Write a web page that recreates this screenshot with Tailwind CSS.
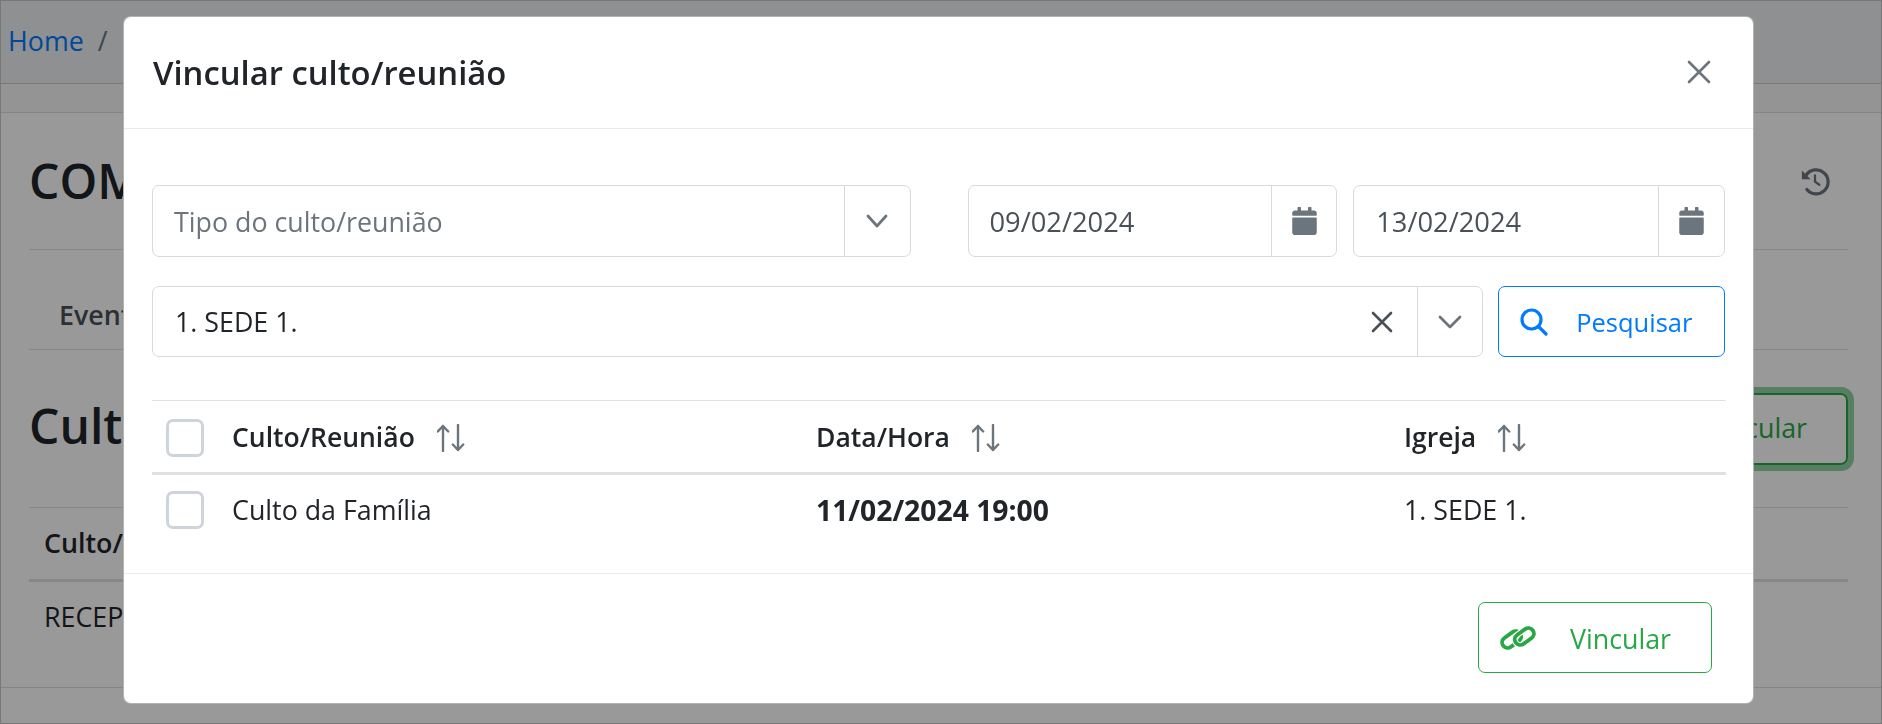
<!DOCTYPE html>
<html lang="pt-BR">
<head>
    <meta charset="UTF-8">
    <meta name="viewport" content="width=device-width, initial-scale=1.0">
    <title>Vincular culto/reunião</title>
    <script src="https://cdn.jsdelivr.net/npm/@tailwindcss/browser@4"></script>
</head>
<body class="bg-white overflow-hidden font-['Open_Sans','Noto_Sans',sans-serif] text-[26.8px] text-[#212529]">
    <!-- page behind the modal -->
    <div class="h-[724px] border border-[#c8c8c8] overflow-hidden">
        <header class="h-[83px] bg-[#edf0f3] border-b border-[#c4c6c8] flex items-center pl-[7px] pb-[1px]">
            <a href="#" class="text-[#007bff]">Home</a>
            <span class="ml-[14px] text-[#6c757d]">/</span>
        </header>
        <div class="h-[29px] bg-[#f7f7f7] border-b border-[#dedede]"></div>
        <main class="h-[575px] border-b border-[#dedede] pl-[28px] pr-[33px]">
            <div class="h-[137px] border-b border-[#dee2e6] flex items-center justify-between">
                <h2 class="text-[48px] font-semibold">COM</h2>
                <svg class="w-[30px] h-[30px] mr-[18px] text-[#6c757d]" viewBox="0 0 24 24" fill="none" stroke="currentColor" stroke-width="2.600" stroke-linecap="round">
                    <path d="M5 7.200A9.600 9.600 0 1 1 5.500 18.800"/>
                    <path d="M1.500 3.500v7h7z" fill="currentColor" stroke="none"/>
                    <path d="M12 7.500v5l3.500 2.500" stroke-width="1.800"/>
                </svg>
            </div>
            <div class="h-[100px] border-b border-[#dee2e6] pt-[45px] pl-[30px] font-semibold text-[#495057]">Eventos</div>
            <div class="h-[158px] border-b border-[#dee2e6] flex items-center justify-between">
                <h2 class="text-[48px] font-semibold pb-[6px]">Cultos</h2>
                <button class="h-[72px] w-[300px] border-2 border-[#28a745] rounded-[7px] ring-[6px] ring-[#28a745]/50 text-[#28a745] text-right pr-[39px]">Vincular</button>
            </div>
            <div class="h-[74px] border-b-[3px] border-[#dee2e6] pl-[15px] pt-[15px] font-semibold">Culto/Reunião</div>
            <div class="pl-[15px] pt-[15px]">RECEPÇÃO</div>
        </main>
    </div>

    <!-- backdrop -->
    <div class="fixed inset-0 bg-black/40"></div>

    <!-- modal -->
    <div class="fixed left-[123px] top-[16px] w-[1631px] h-[688px] bg-white rounded-[8px] border border-black/30 flex flex-col">
        <div class="h-[112px] shrink-0 border-b border-[#e9ecef] flex items-center justify-between pl-[29px] pr-[42px]">
            <h5 class="text-[32.800px] font-semibold">Vincular culto/reunião</h5>
            <button class="text-[#6c757d] pb-[2px]">
                <svg class="w-[24px] h-[24px]" viewBox="0 0 24 24" fill="none" stroke="currentColor" stroke-width="2.600" stroke-linecap="round"><path d="M2 2l20 20M22 2L2 22"/></svg>
            </button>
        </div>

        <div class="flex-1 px-[28px] pt-[56px]">
            <div class="flex">
                <div class="w-[759px] h-[72px] border border-[#d5dae0] rounded-[7px] flex items-center">
                    <span class="flex-1 pl-[21px] text-[#6c757d] pt-[2px]">Tipo do culto/reunião</span>
                    <span class="w-[66px] h-full border-l border-[#d5dae0] flex items-center justify-center">
                        <svg class="w-[22px] h-[14px] text-[#6c757d]" viewBox="0 0 22 14" fill="none" stroke="currentColor" stroke-width="2.800" stroke-linecap="round" stroke-linejoin="round"><path d="M2 2l9 10 9-10"/></svg>
                    </span>
                </div>
                <div class="w-[370px] h-[72px] ml-[57px] border border-[#d5dae0] rounded-[7px] flex items-center">
                    <span class="flex-1 pl-[21px] text-[#495057] text-[27.300px] pt-[2px]">09/02/2024</span>
                    <span class="w-[65px] h-full border-l border-[#d5dae0] flex items-center justify-center">
                        <svg class="w-[25px] h-[28px] text-[#6c757d]" viewBox="0 0 448 512" fill="currentColor"><path d="M12 192h424c6.600 0 12 5.400 12 12v260c0 26.500-21.500 48-48 48H48c-26.500 0-48-21.500-48-48V204c0-6.600 5.400-12 12-12zm436-44v-36c0-26.500-21.500-48-48-48h-48V12c0-6.600-5.400-12-12-12h-40c-6.600 0-12 5.400-12 12v52H160V12c0-6.600-5.400-12-12-12h-40c-6.600 0-12 5.400-12 12v52H48C21.500 64 0 85.500 0 112v36c0 6.600 5.400 12 12 12h424c6.600 0 12-5.400 12-12z"/></svg>
                    </span>
                </div>
                <div class="w-[372px] h-[72px] ml-[16px] border border-[#d5dae0] rounded-[7px] flex items-center">
                    <span class="flex-1 pl-[22px] text-[#495057] text-[27.300px] pt-[2px]">13/02/2024</span>
                    <span class="w-[66px] h-full border-l border-[#d5dae0] flex items-center justify-center">
                        <svg class="w-[25px] h-[28px] text-[#6c757d]" viewBox="0 0 448 512" fill="currentColor"><path d="M12 192h424c6.600 0 12 5.400 12 12v260c0 26.500-21.500 48-48 48H48c-26.500 0-48-21.500-48-48V204c0-6.600 5.400-12 12-12zm436-44v-36c0-26.500-21.500-48-48-48h-48V12c0-6.600-5.400-12-12-12h-40c-6.600 0-12 5.400-12 12v52H160V12c0-6.600-5.400-12-12-12h-40c-6.600 0-12 5.400-12 12v52H48C21.500 64 0 85.500 0 112v36c0 6.600 5.400 12 12 12h424c6.600 0 12-5.400 12-12z"/></svg>
                    </span>
                </div>
            </div>

            <div class="flex mt-[29px]">
                <div class="w-[1332px] h-[71px] border border-[#d5dae0] rounded-[7px] flex items-center">
                    <span class="flex-1 pl-[22px] pt-[1px]">1. SEDE 1.</span>
                    <svg class="w-[22px] h-[22px] mr-[24px] text-[#495057]" viewBox="0 0 22 22" fill="none" stroke="currentColor" stroke-width="2.600" stroke-linecap="round"><path d="M2 2l18 18M20 2L2 20"/></svg>
                    <span class="w-[65px] h-full border-l border-[#d5dae0] flex items-center justify-center">
                        <svg class="w-[24px] h-[14px] text-[#6c757d]" viewBox="0 0 24 14" fill="none" stroke="currentColor" stroke-width="2.800" stroke-linecap="round" stroke-linejoin="round"><path d="M2 2l10 10 10-10"/></svg>
                    </span>
                </div>
                <button class="w-[227px] h-[71px] ml-[15px] border border-[#007bff] rounded-[7px] text-[#007bff] flex items-center pl-[21px]">
                    <svg class="w-[28px] h-[28px]" viewBox="0 0 28 28" fill="none" stroke="currentColor" stroke-width="3.200" stroke-linecap="round"><circle cx="11.500" cy="11.500" r="9.500"/><path d="M19 19l7 7"/></svg>
                    <span class="ml-[28px] pt-[1px] text-[25.500px]">Pesquisar</span>
                </button>
            </div>

            <table class="w-[1574px] mt-[43px] table-fixed border-t border-[#dee2e6]">
                <colgroup><col class="w-[68px]"><col class="w-[584px]"><col class="w-[589px]"><col></colgroup>
                <thead>
                    <tr class="h-[73px] border-b-[3px] border-[#dee2e6] text-left">
                        <th class="pl-[14px] pt-[3px]"><span class="block w-[38px] h-[38px] border-[3px] border-[#ced4da] rounded-[7px]"></span></th>
                        <th class="pl-[12px] pt-[3px] font-semibold text-[26.500px]"><span class="flex items-center">Culto/Reunião
                            <svg class="w-[28px] h-[28px] ml-[22px] text-[#6c757d]" viewBox="0 0 28 28" fill="none" stroke="currentColor" stroke-width="2.400" stroke-linecap="round" stroke-linejoin="round"><path d="M6 27V2M.8 7.500L6 2l5.200 5.500M21 1v25M15.800 20.500L21 26l5.200-5.500"/></svg></span></th>
                        <th class="pl-[12px] pt-[3px] font-semibold text-[26.500px]"><span class="flex items-center">Data/Hora
                            <svg class="w-[28px] h-[28px] ml-[22px] text-[#6c757d]" viewBox="0 0 28 28" fill="none" stroke="currentColor" stroke-width="2.400" stroke-linecap="round" stroke-linejoin="round"><path d="M6 27V2M.8 7.500L6 2l5.200 5.500M21 1v25M15.800 20.500L21 26l5.200-5.500"/></svg></span></th>
                        <th class="pl-[11px] pt-[3px] font-semibold text-[26.500px]"><span class="flex items-center">Igreja
                            <svg class="w-[28px] h-[28px] ml-[22px] text-[#6c757d]" viewBox="0 0 28 28" fill="none" stroke="currentColor" stroke-width="2.400" stroke-linecap="round" stroke-linejoin="round"><path d="M6 27V2M.8 7.500L6 2l5.200 5.500M21 1v25M15.800 20.500L21 26l5.200-5.500"/></svg></span></th>
                    </tr>
                </thead>
                <tbody>
                    <tr class="h-[72px]">
                        <td class="pl-[14px]"><span class="block w-[38px] h-[38px] border-[3px] border-[#ced4da] rounded-[7px]"></span></td>
                        <td class="pl-[12px]">Culto da Família</td>
                        <td class="pl-[12px] font-bold text-[28.300px]">11/02/2024 19:00</td>
                        <td class="pl-[11px]">1. SEDE 1.</td>
                    </tr>
                </tbody>
            </table>
        </div>

        <div class="h-[130px] shrink-0 border-t border-[#e9ecef] flex justify-end pr-[41px] pt-[28px]">
            <button class="w-[234px] h-[71px] border border-[#28a745] rounded-[7px] text-[#28a745] flex items-center pl-[21px]">
                <svg class="w-[36px] h-[28px]" viewBox="0 0 36 28" fill="none" stroke="currentColor" stroke-width="3.800">
                    <g transform="rotate(-36 18 14)">
                        <rect x="1.500" y="6" width="21" height="11" rx="5.500"/>
                        <rect x="13.500" y="11" width="21" height="11" rx="5.500" stroke="white" stroke-width="6"/>
                        <rect x="13.500" y="11" width="21" height="11" rx="5.500"/>
                    </g>
                </svg>
                <span class="ml-[34px] pt-[3px]">Vincular</span>
            </button>
        </div>
    </div>
</body>
</html>
